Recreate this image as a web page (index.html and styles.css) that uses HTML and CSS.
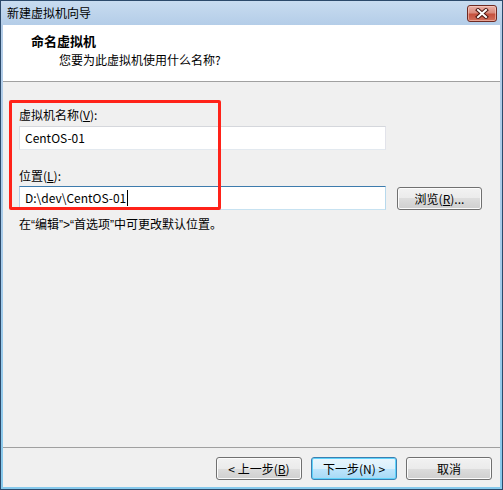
FILE: index.html
```html
<!DOCTYPE html>
<html lang="zh-CN">
<head>
    <meta charset="UTF-8">
    <meta name="viewport" content="width=device-width, initial-scale=1.0">
    <title>新建虚拟机向导</title>
    <link rel="stylesheet" href="styles.css">
</head>
<body>
    <div class="window">
        <div class="titlebar">
            <span class="title">新建虚拟机向导</span>
            <button class="close" aria-label="关闭">
                <svg width="14" height="11" viewBox="0 0 14 11">
                    <path d="M3 2 L11 9 M11 2 L3 9" stroke="#4a1610" stroke-width="4" stroke-linecap="square"/>
                    <path d="M3 2 L11 9 M11 2 L3 9" stroke="#fff" stroke-width="2" stroke-linecap="square"/>
                </svg>
            </button>
        </div>
        <div class="client">
            <div class="header">
                <div class="header-title">命名虚拟机</div>
                <div class="header-sub">您要为此虚拟机使用什么名称?</div>
            </div>
            <div class="content">
                <div class="field-label">虚拟机名称(<u>V</u>):</div>
                <div class="textbox">CentOS-01</div>

                <div class="field-label second">位置(<u>L</u>):</div>
                <div class="row">
                    <div class="textbox focused">D:\dev\CentOS-01<span class="caret"></span></div>
                    <button class="btn browse">浏览(<u>R</u>)...</button>
                </div>
                <div class="note">在<span class="q">“</span>编辑<span class="q">”&gt;“</span>首选项<span class="q">”</span>中可更改默认位置。</div>

                <div class="highlight"></div>
            </div>
            <div class="footer">
                <button class="btn">&lt; 上一步(<u>B</u>)</button>
                <button class="btn default">下一步(N) &gt;</button>
                <button class="btn">取消</button>
            </div>
        </div>
    </div>
</body>
</html>
```

FILE: styles.css
```css
body {
    margin: 0;
    font-family: "Noto Sans CJK SC", "DejaVu Sans", sans-serif;
    font-size: 12px;
    color: #000;
}
.window {
    width: 503px;
    height: 490px;
    box-sizing: border-box;
    border: 1px solid #2c4a6b;
    padding: 0 2px 2px 2px;
    display: flex;
    flex-direction: column;
    background: linear-gradient(#c8dcf0 0, #b4cde8 24px, #a6cbea 55%, #86c9ec 100%);
}
.titlebar {
    height: 24px;
    flex: none;
    display: flex;
    align-items: center;
    justify-content: space-between;
    padding: 0 3px 0 4px;
}
.title {
    line-height: 16px;
}
.close {
    width: 30px;
    height: 17px;
    padding: 0;
    margin-top: 1px;
    border: 1px solid #6e2a22;
    border-radius: 3px;
    background: linear-gradient(#eab0a6 0, #d98a7c 45%, #c5503d 55%, #d2705c 100%);
    box-shadow: inset 0 0 0 1px rgba(255, 220, 210, 0.5);
    display: flex;
    align-items: center;
    justify-content: center;
}
.client {
    flex: 1;
    display: flex;
    flex-direction: column;
    background: #f0f0f0;
}
.header {
    height: 48px;
    flex: none;
    background: #fff;
    border-bottom: 1px solid #a0a0a0;
    padding: 8px 0 0 28px;
}
.header-title {
    font-size: 13px;
    font-weight: bold;
    line-height: 16px;
}
.header-sub {
    margin: 3px 0 0 28px;
    line-height: 16px;
}
.content {
    flex: 1;
    position: relative;
    padding: 25px 0 0 16px;
}
.field-label {
    line-height: 16px;
    margin-bottom: 3px;
}
.field-label.second {
    margin-top: 18px;
    margin-bottom: 2px;
}
.textbox {
    width: 367px;
    height: 24px;
    box-sizing: border-box;
    border: 1px solid;
    border-color: #d5d7dc #e2e3ea #e3e9ef #dbdfe6;
    background: #fff;
    padding-left: 5px;
    line-height: 22px;
    display: flex;
    align-items: center;
}
.textbox.focused {
    border-color: #3d7bad #b7d9ed #c7e2f1 #b5cfe7;
}
.caret {
    width: 1px;
    height: 16px;
    background: #000;
    margin-left: 1px;
}
.row {
    display: flex;
    align-items: center;
    gap: 11px;
}
.note {
    margin-top: 6px;
    line-height: 16px;
}
.q {
    font-family: "Liberation Sans", sans-serif;
}
.highlight {
    position: absolute;
    left: 6px;
    top: 18px;
    width: 212px;
    height: 110px;
    box-sizing: border-box;
    border: 3px solid #ff2219;
    border-radius: 2px;
    pointer-events: none;
}
.footer {
    flex: none;
    height: 40px;
    box-sizing: border-box;
    border-top: 1px solid #a0a0a0;
    display: flex;
    justify-content: flex-end;
    gap: 9px;
    padding: 9px 8px 0 0;
}
.btn {
    width: 86px;
    height: 23px;
    padding: 0;
    font: inherit;
    color: #000;
    border: 1px solid #707070;
    border-radius: 3px;
    background: linear-gradient(#f2f2f2 0, #ebebeb 50%, #dddddd 50%, #cfcfcf 100%);
    box-shadow: inset 0 0 0 1px #fcfcfc;
    line-height: 19px;
}
.btn.browse {
    width: 85px;
}
.btn.default {
    border-color: #3c7fb1;
    background: linear-gradient(#eaf6fd 0, #d9f0fc 50%, #bee6fd 50%, #a7d9f5 100%);
    box-shadow: inset 0 0 0 1px #5fd3fb;
}
```
